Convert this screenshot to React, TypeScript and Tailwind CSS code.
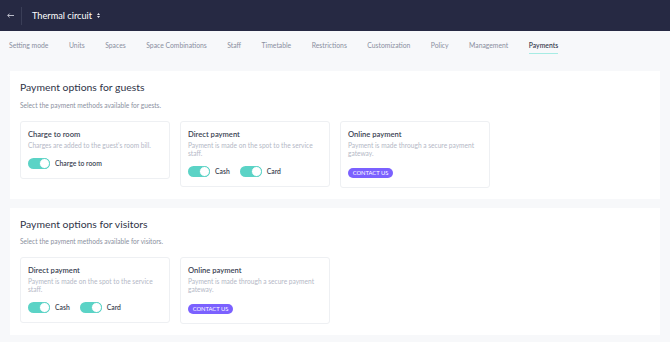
import { useState } from "react";

const tabs = [
  "Setting mode",
  "Units",
  "Spaces",
  "Space Combinations",
  "Staff",
  "Timetable",
  "Restrictions",
  "Customization",
  "Policy",
  "Management",
  "Payments",
];

function Toggle({ label }: { label: string }) {
  const [on, setOn] = useState(true);
  return (
    <button onClick={() => setOn(!on)} className="flex items-center gap-[5px]">
      <span
        className={
          "relative w-[22px] h-[11px] rounded-full " +
          (on ? "bg-[#5bd3c6]" : "bg-[#d5d8e0]")
        }
      >
        <span
          className={
            "absolute top-0 w-[11px] h-[11px] rounded-full bg-white border border-[#5bd3c6] " +
            (on ? "right-0" : "left-0")
          }
        />
      </span>
      <span className="text-[6.8px] font-semibold text-[#3a3f52]">{label}</span>
    </button>
  );
}

function ContactButton() {
  return (
    <button className="mt-[2px] bg-[#7b61ff] text-white text-[5.8px] uppercase rounded-full w-[45px] h-[10px] leading-[10px]">
      Contact us
    </button>
  );
}

function OptionCard({
  title,
  desc,
  children,
}: {
  title: string;
  desc: string;
  children: React.ReactNode;
}) {
  return (
    <div className="w-[150px] border border-[#eef0f3] rounded-[3px] px-[7px] pt-[6px] pb-[9px] bg-white">
      <div className="text-[7.6px] font-semibold text-[#3a3f52] leading-[12px]">{title}</div>
      <div className="text-[6.6px] text-[#b4b8c6] leading-[8px] mt-[1px]">{desc}</div>
      <div className="mt-[9px] flex items-center gap-[10px]">{children}</div>
    </div>
  );
}

function Section({
  title,
  subtitle,
  children,
}: {
  title: string;
  subtitle: string;
  children: React.ReactNode;
}) {
  return (
    <div className="bg-white px-[10px] pt-[10px] pb-[11px]">
      <h2 className="text-[10.4px] text-[#2f3447] leading-[12px]">{title}</h2>
      <p className="text-[6.6px] text-[#8b90a0] leading-[8px] mt-[7.5px]">{subtitle}</p>
      <div className="flex items-start gap-[10px] mt-[12px]">{children}</div>
    </div>
  );
}

export default function App() {
  return (
    <div className="w-[670px] h-[342px] bg-[#f7f8fa] font-['Lato',sans-serif] overflow-hidden">
      <header className="h-[31px] bg-[#262943] flex items-center">
        <div className="w-[22px] h-[18px] flex items-center justify-center border-r border-[#3a3e57]">
          <svg width="7" height="5" viewBox="0 0 7 5" fill="none" stroke="#c9ccd8" strokeWidth="0.9">
            <path d="M7 2.5H0.8M2.6 0.6L0.7 2.5L2.6 4.4" />
          </svg>
        </div>
        <div className="pl-[10px] flex items-center gap-[5px]">
          <span className="text-white text-[9.2px]">Thermal circuit</span>
          <svg width="3" height="5" viewBox="0 0 3 5" fill="#e5e7ee">
            <path d="M1.5 0L3 2H0Z M1.5 5L0 3H3Z" />
          </svg>
        </div>
      </header>
      <nav className="h-[23px] flex items-end pl-[9px] gap-[20.5px] text-[6.8px] text-[#8a8f9f]">
        {tabs.map((t) =>
          t === "Payments" ? (
            <div key={t} className="pb-[3px] border-b-[1.5px] border-[#a6ece4] text-[#3a3f52] font-semibold leading-[10px]">
              {t}
            </div>
          ) : (
            <div key={t} className="pb-[3px] border-b-[1.5px] border-transparent leading-[10px]">
              {t}
            </div>
          )
        )}
      </nav>
      <main className="pt-[17px] pl-[10px] pr-[10px] flex flex-col gap-[9px]">
        <Section title="Payment options for guests" subtitle="Select the payment methods available for guests.">
          <OptionCard title="Charge to room" desc="Charges are added to the guest's room bill.">
            <Toggle label="Charge to room" />
          </OptionCard>
          <OptionCard title="Direct payment" desc="Payment is made on the spot to the service staff.">
            <Toggle label="Cash" />
            <Toggle label="Card" />
          </OptionCard>
          <OptionCard title="Online payment" desc="Payment is made through a secure payment gateway.">
            <ContactButton />
          </OptionCard>
        </Section>
        <Section title="Payment options for visitors" subtitle="Select the payment methods available for visitors.">
          <OptionCard title="Direct payment" desc="Payment is made on the spot to the service staff.">
            <Toggle label="Cash" />
            <Toggle label="Card" />
          </OptionCard>
          <OptionCard title="Online payment" desc="Payment is made through a secure payment gateway.">
            <ContactButton />
          </OptionCard>
        </Section>
      </main>
    </div>
  );
}
